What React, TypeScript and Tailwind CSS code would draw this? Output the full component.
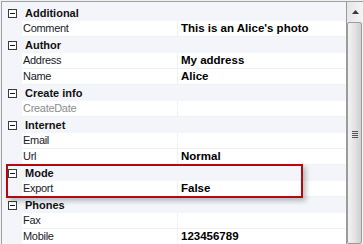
import React from "react";

type Row = { cat?: string; name?: string; value?: string; gray?: boolean };

const rows: Row[] = [
  { cat: "Additional" },
  { name: "Comment", value: "This is an Alice's photo" },
  { cat: "Author" },
  { name: "Address", value: "My address" },
  { name: "Name", value: "Alice" },
  { cat: "Create info" },
  { name: "CreateDate", value: "", gray: true },
  { cat: "Internet" },
  { name: "Email", value: "" },
  { name: "Url", value: "Normal" },
  { cat: "Mode" },
  { name: "Export", value: "False" },
  { cat: "Phones" },
  { name: "Fax", value: "" },
  { name: "Mobile", value: "123456789" },
];

function Minus() {
  return (
    <div className="w-[9px] h-[9px] border border-[#3c3c3c] bg-white flex items-center justify-center ml-[6px] mr-[8px] shrink-0">
      <div className="w-[5px] h-[1px] bg-[#1a1a1a]" />
    </div>
  );
}

export default function App() {
  return (
    <div
      className="relative w-[363px] h-[244px] overflow-hidden bg-[#f0f0f0]"
      style={{ fontFamily: '"Liberation Sans", Arial, sans-serif' }}
    >
      <div className="absolute left-[1px] top-[1px] right-0 bottom-0 border-t border-l border-[#a0a0a0] flex bg-[#f3f5fa]">
        <div className="w-[344px] flex flex-col pt-[3px]">
          {rows.map((r, i) =>
            r.cat ? (
              <div key={i} className="h-[16px] flex items-center bg-[#f3f5fa] shrink-0">
                <Minus />
                <span className="text-[11px] font-bold text-[#111]">{r.cat}</span>
              </div>
            ) : (
              <div key={i} className="h-[16px] flex shrink-0 bg-[#f3f5fa]">
                <div className="w-[20px] shrink-0" />
                <div className="w-[155px] shrink-0 bg-white border-b border-[#eef1f6] flex items-center pl-[1px]">
                  <span
                    className={`text-[11px] tracking-[-0.3px] ${r.gray ? "text-[#8d8d8d]" : "text-[#1a1a2a]"}`}
                  >
                    {r.name}
                  </span>
                </div>
                <div className="w-[1px] bg-[#eef1f6] shrink-0" />
                <div className="flex-1 bg-white border-b border-[#eef1f6] flex items-center pl-[3px]">
                  <span className="text-[11.5px] font-bold text-black">{r.value}</span>
                </div>
              </div>
            )
          )}
        </div>
        {/* scrollbar */}
        <div className="flex-1 border-l border-[#9a9a9a] bg-gradient-to-r from-[#e6e6e6] to-[#f4f4f4] flex flex-col">
          <div className="h-[20px] flex items-center justify-center shrink-0">
            <svg width="7" height="4" viewBox="0 0 7 4">
              <path d="M0 4 L3.5 0 L7 4 Z" fill="#3a3a3a" />
            </svg>
          </div>
          <div className="ml-[0px] w-[15px] h-[236px] border border-[#9c9c9c] rounded-[2px] bg-gradient-to-r from-[#f2f2f2] via-[#e4e4e4] to-[#cfcfcf] flex items-center justify-center">
            <div className="flex flex-col gap-[1px] mt-[2px]">
              <div className="w-[6px] h-[1px] bg-[#555]" />
              <div className="w-[6px] h-[1px] bg-[#555]" />
              <div className="w-[6px] h-[1px] bg-[#555]" />
              <div className="w-[6px] h-[1px] bg-[#555]" />
            </div>
          </div>
        </div>
      </div>
      {/* highlight box */}
      <div className="absolute left-[6px] top-[164px] w-[297px] h-[34px] border-2 border-[#b8070d] shadow-[3px_3px_5px_rgba(0,0,0,0.25)]" />
    </div>
  );
}
